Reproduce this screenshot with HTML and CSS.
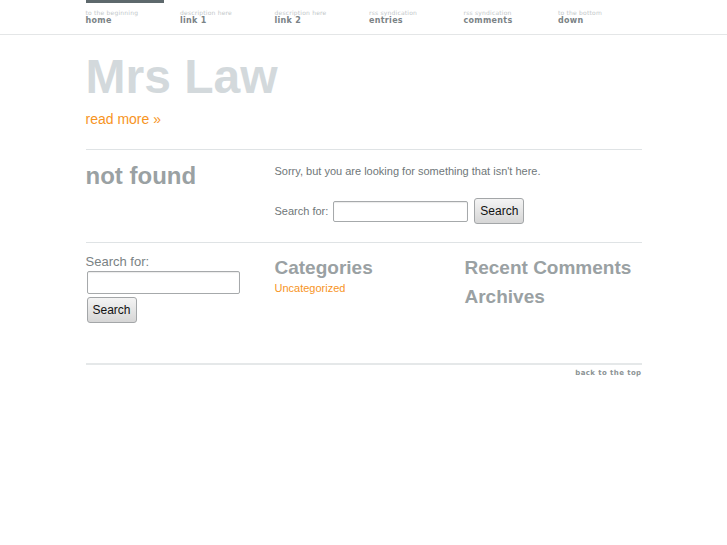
FILE: index.html
```html
<!DOCTYPE html>
<html>
<head>
<meta charset="utf-8">
<link rel="stylesheet" href="styles.css">
</head>
<body>
<div class="topnav">
  <ul class="nav">
    <li class="current"><span class="desc">to the beginning</span><a href="#">home</a></li>
    <li><span class="desc">description here</span><a href="#">link 1</a></li>
    <li><span class="desc">description here</span><a href="#">link 2</a></li>
    <li><span class="desc">rss syndication</span><a href="#">entries</a></li>
    <li><span class="desc">rss syndication</span><a href="#">comments</a></li>
    <li><span class="desc">to the bottom</span><a href="#">down</a></li>
  </ul>
</div>
<div class="wrap">
  <header class="masthead">
    <h1 class="title">Mrs Law</h1>
    <a class="more" href="#">read more »</a>
  </header>
  <section class="notfound">
    <h2 class="nf-title">not found</h2>
    <div class="nf-body">
      <p class="sorry">Sorry, but you are looking for something that isn't here.</p>
      <form class="inline-search">
        <label>Search for:</label>
        <input type="text" class="field wide">
        <button type="button" class="btn">Search</button>
      </form>
    </div>
  </section>
  <section class="widgets">
    <div class="col">
      <form class="side-search">
        <label>Search for:</label>
        <input type="text" class="field side">
        <button type="button" class="btn">Search</button>
      </form>
    </div>
    <div class="col">
      <h3 class="wtitle">Categories</h3>
      <a class="cat" href="#">Uncategorized</a>
    </div>
    <div class="col">
      <h3 class="wtitle">Recent Comments</h3>
      <h3 class="wtitle">Archives</h3>
    </div>
  </section>
  <footer class="foot">
    <a href="#">back to the top</a>
  </footer>
</div>
</body>
</html>
```
FILE: styles.css
```css
* { box-sizing: border-box; }
body {
  margin: 0;
  background: #fff;
  font-family: "Liberation Sans", Arial, sans-serif;
  color: #7a8284;
}
a { text-decoration: none; }
.topnav {
  border-bottom: 1px solid #e4e6e7;
  height: 35px;
}
.nav {
  list-style: none;
  margin: 0 auto;
  padding: 0;
  width: 556px;
  display: flex;
}
.nav li {
  flex: 0 0 94.5px;
  padding-top: 6px;
  display: flex;
  flex-direction: column;
  border-top: 3px solid transparent;
}
.nav li.current {
  border-top-color: #5d686c;
  flex-basis: 78px;
  margin-right: 16.5px;
}
.desc {
  font-family: "DejaVu Sans", sans-serif;
  font-size: 6px;
  color: #c3c8ca;
  line-height: 7px;
  letter-spacing: 0.2px;
}
.nav a {
  font-family: "DejaVu Sans", sans-serif;
  font-weight: bold;
  font-size: 8px;
  color: #7b8386;
  line-height: 10px;
  letter-spacing: 0.3px;
}
.wrap {
  width: 556px;
  margin: 0 auto;
}
.masthead {
  padding-top: 15px;
  padding-bottom: 21px;
  border-bottom: 1px solid #dfe3e5;
}
.title {
  margin: 0;
  font-size: 48px;
  line-height: 54px;
  color: #d3d9dc;
  font-weight: bold;
}
.more {
  display: block;
  margin-top: 7px;
  font-size: 14px;
  line-height: 17px;
  color: #f7941e;
}
.notfound {
  display: flex;
  padding-top: 12px;
  padding-bottom: 18px;
  border-bottom: 1px solid #dfe3e5;
}
.nf-title {
  margin: 0;
  flex: 0 0 189px;
  font-size: 24px;
  line-height: 28px;
  color: #9aa1a3;
}
.sorry {
  margin: 2px 0 0;
  font-size: 11px;
  line-height: 14px;
  color: #6f7779;
}
.inline-search {
  margin-top: 20px;
  display: flex;
  align-items: center;
  font-size: 11px;
  color: #6f7779;
}
.inline-search label { margin-right: 5px; }
.field {
  border: 1px solid #a6a9ab;
  border-radius: 2px;
  background: #fff;
  box-shadow: inset 0 1px 1px rgba(0,0,0,0.08);
}
.field.wide { width: 135px; height: 21px; margin-right: 6px; }
.btn {
  font-family: "Liberation Sans", Arial, sans-serif;
  font-size: 12px;
  color: #111;
  border: 1px solid #a3a6a8;
  border-radius: 3px;
  background: linear-gradient(#f4f4f4, #d6d6d6);
  padding: 0 5px;
  height: 26px;
}
.widgets {
  display: flex;
  padding-top: 11px;
  height: 122px;
  border-bottom: 2px solid #e5e8e9;
}
.col { flex: 0 0 190px; }
.col:first-child { flex-basis: 189px; }
.col:last-child { flex-basis: 177px; }
.side-search label {
  display: block;
  font-size: 13px;
  line-height: 16px;
  color: #7a8284;
}
.field.side {
  display: block;
  width: 153px;
  height: 23px;
  margin: 1px 0 3px 1px;
}
.side-search .btn { margin-left: 1px; }
.wtitle {
  margin: 2px 0 6px;
  font-size: 19px;
  line-height: 23px;
  color: #9aa1a3;
}
.cat {
  display: block;
  font-size: 11px;
  color: #f7941e;
  margin-top: -3px;
}
.foot {
  text-align: right;
  padding-top: 3px;
  font-size: 7px;
  line-height: 9px;
}
.foot a {
  font-family: "DejaVu Sans", sans-serif;
  font-size: 7px;
  font-weight: bold;
  color: #8c9395;
  letter-spacing: 0.4px;
}
```
